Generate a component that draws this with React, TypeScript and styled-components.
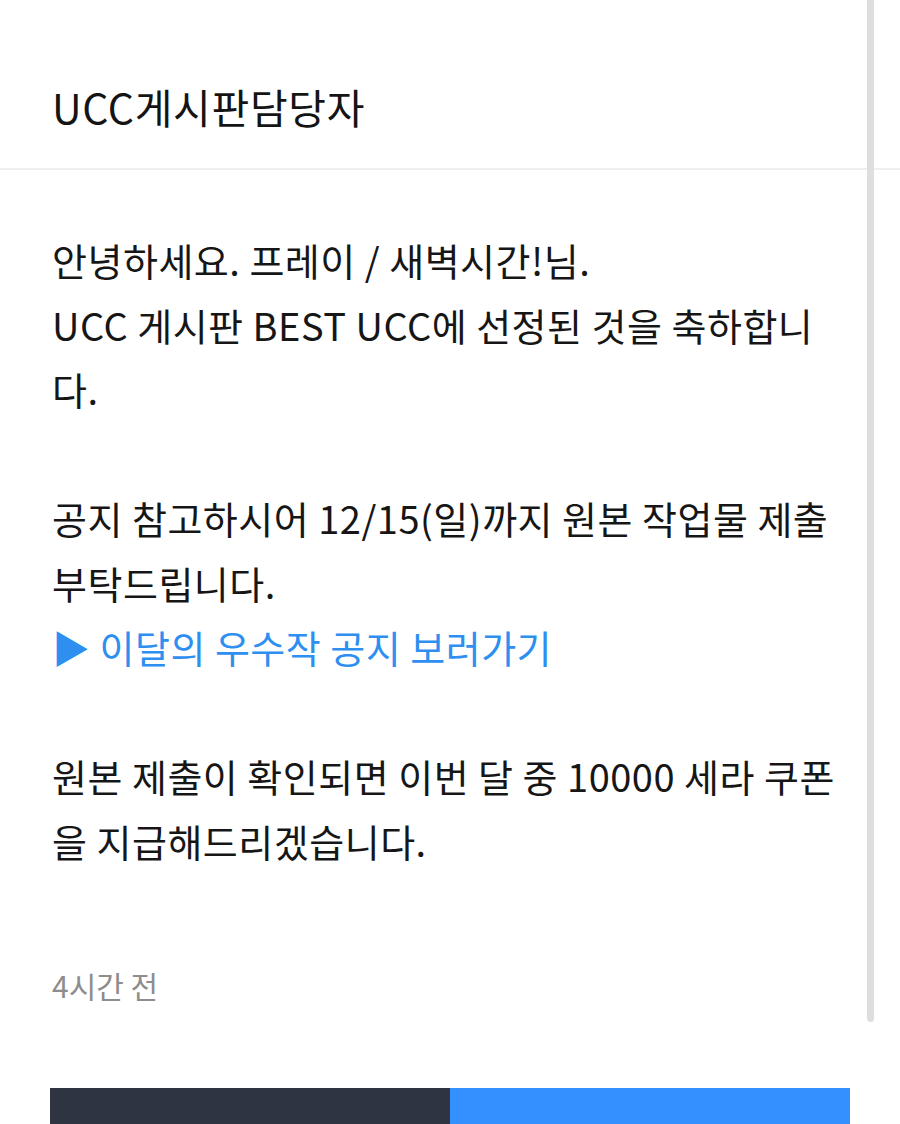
import styled, { createGlobalStyle } from 'styled-components'

const GlobalStyle = createGlobalStyle`
  html, body {
    margin: 0;
    padding: 0;
    background: #ffffff;
  }
  body {
    font-family: "Noto Sans CJK KR", "Noto Sans", sans-serif;
    color: #161616;
  }
`

const Page = styled.div`
  position: relative;
  width: 900px;
  height: 1124px;
  overflow: hidden;
  background: #fff;
`

// 우측 스크롤바 (내용 위에 겹침)
const ScrollBar = styled.div`
  position: absolute;
  top: 0;
  right: 26px;
  width: 7px;
  height: 1022px;
  background: #dedede;
  border-radius: 0 0 4px 4px;
`

const Header = styled.header`
  height: 170px;
  padding: 78px 52px 0;
  box-sizing: border-box;
  border-bottom: 2px solid #eeeeee;
`

const Title = styled.h1`
  margin: 0;
  font-size: 41px;
  line-height: 56px;
  font-weight: 400;
  letter-spacing: 0.7px;
  color: #141414;
`

const Body = styled.section`
  padding: 58px 52px 0;
`

const Message = styled.div`
  font-size: 38px;
  line-height: 64.5px;
  letter-spacing: 0.5px;
  color: #161616;
`

// 원본 화면의 줄바꿈 위치를 그대로 따름
const Line = styled.p<{ $blank?: boolean }>`
  margin: 0;
  white-space: nowrap;
  min-height: ${p => (p.$blank ? '64.5px' : 'auto')};
`

const LinkLine = styled.a`
  display: block;
  color: #2e8ff0;
  text-decoration: none;
  white-space: nowrap;
`

const Time = styled.div`
  margin-top: 90px;
  font-size: 30px;
  line-height: 44px;
  color: #8d8d8d;
`

const Actions = styled.div`
  display: flex;
  margin: 81px 50px 0;
  height: 70px;
`

const ActionButton = styled.button<{ $primary?: boolean }>`
  flex: 1;
  border: 0;
  background: ${p => (p.$primary ? '#3490fe' : '#2e3441')};
`

export default function App() {
  return (
    <Page>
      <GlobalStyle />
      <Header>
        <Title>UCC게시판담당자</Title>
      </Header>
      <Body>
        <Message>
          <Line>안녕하세요. 프레이 / 새벽시간!님.</Line>
          <Line>UCC 게시판 BEST UCC에 선정된 것을 축하합니</Line>
          <Line>다.</Line>
          <Line $blank />
          <Line>공지 참고하시어 12/15(일)까지 원본 작업물 제출</Line>
          <Line>부탁드립니다.</Line>
          <LinkLine href="#">▶ 이달의 우수작 공지 보러가기</LinkLine>
          <Line $blank />
          <Line>원본 제출이 확인되면 이번 달 중 10000 세라 쿠폰</Line>
          <Line>을 지급해드리겠습니다.</Line>
        </Message>
        <Time>4시간 전</Time>
      </Body>
      <Actions>
        <ActionButton />
        <ActionButton $primary />
      </Actions>
      <ScrollBar />
    </Page>
  )
}
